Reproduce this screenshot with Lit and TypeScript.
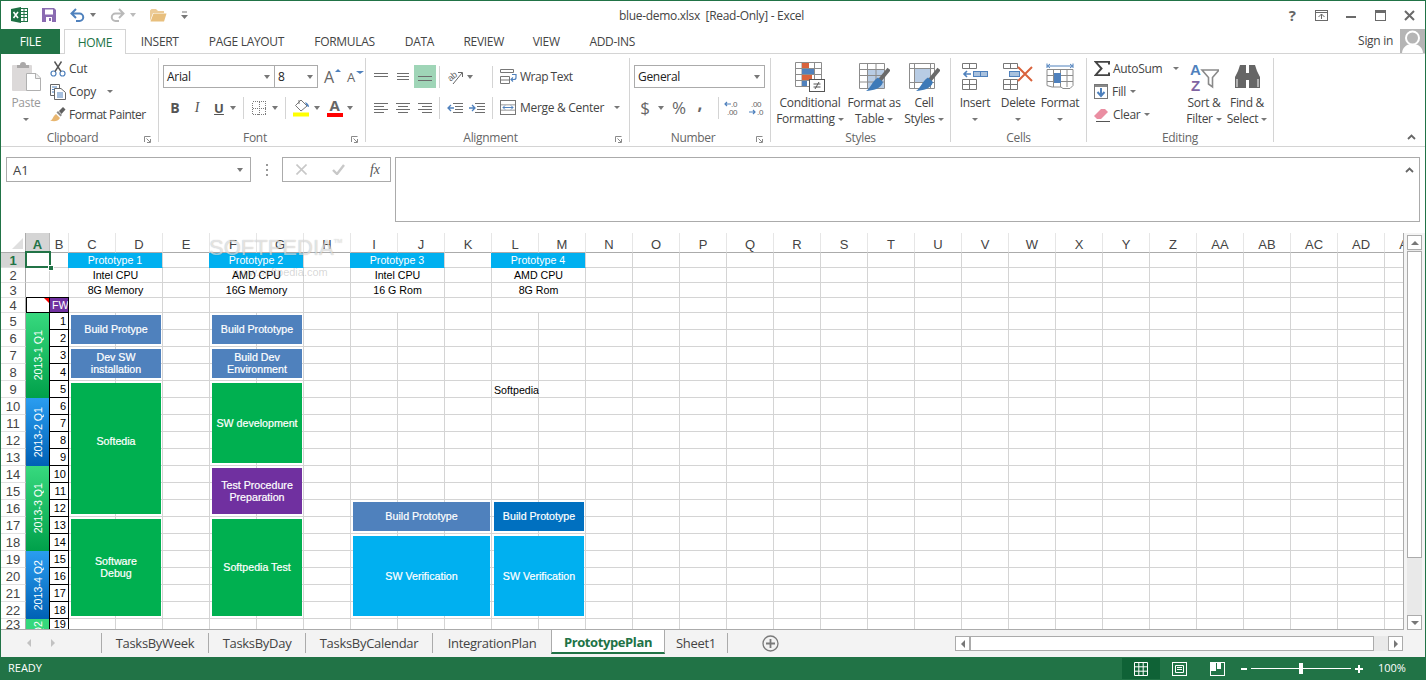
import { LitElement, html, css, svg, TemplateResult } from "lit";
import { customElement } from "lit/decorators.js";

const BL = "#4f81bd", GR = "#6d6d6d";
const ic = (w: number, h: number, body: unknown) =>
  html`<svg class="ic" width=${w} height=${h} viewBox="0 0 ${w} ${h}">${body}</svg>`;
const ln = (x1: number, y1: number, x2: number, y2: number, c = GR, sw = 1) =>
  svg`<line x1=${x1} y1=${y1} x2=${x2} y2=${y2} stroke=${c} stroke-width=${sw}/>`;
const caret = html`<i class="car"></i>`;

const icons: Record<string, () => TemplateResult> = {
  excel: () => ic(17, 16, svg`<rect x="9.5" y="1.5" width="7" height="13" fill="#fff" stroke="#1e7145"/>
    <path d="M10 4.5h6M10 7.5h6M10 10.5h6M13 2v12" stroke="#1e7145" fill="none"/>
    <path d="M0 2L10 0V16L0 14Z" fill="#1e7145"/><path d="M2.5 5l4.5 6M7 5l-4.5 6" stroke="#fff" stroke-width="1.6"/>`),
  save: () => ic(14, 14, svg`<path d="M0 0H12L14 2V14H0Z" fill="#8a6bb1"/><rect x="3" y="1.5" width="8" height="5" fill="#fff"/>
    <rect x="4" y="9" width="6" height="5" fill="#fff"/><rect x="7" y="10" width="2" height="3" fill="#8a6bb1"/>`),
  undo: () => ic(15, 14, svg`<path d="M6 1L1.5 5.5L6 10M2 5.5H9.5A3.7 3.7 0 0 1 9.5 13H6" fill="none" stroke=${BL} stroke-width="2"/>`),
  redo: () => ic(15, 14, svg`<path d="M9 1L13.5 5.5L9 10M13 5.5H5.5A3.7 3.7 0 0 0 5.5 13H9" fill="none" stroke="#b9b9b9" stroke-width="2"/>`),
  folder: () => ic(17, 14, svg`<path d="M0 13V2.5L1.5 1H6L8 3H14V5H3L0 13Z" fill="#eccb97"/><path d="M0.5 13.5L3.5 5.5H16.5L14 13.5Z" fill="#e8bf7d"/>`),
  custom: () => ic(7, 8, svg`<path d="M1 1H6" stroke="#777"/><path d="M0 4H7L3.5 8Z" fill="#777"/>`),
  help: () => html`<b class="help">?</b>`,
  ribbon: () => ic(13, 11, svg`<rect x=".5" y=".5" width="12" height="10" fill="none" stroke="#6a6a6a"/><path d="M1 2.5H12" stroke="#6a6a6a"/><path d="M3.5 7L6.5 4L9.5 7M6.5 4V9" fill="none" stroke="#6a6a6a"/>`),
  min: () => ic(10, 11, svg`<rect y="6" width="10" height="2" fill="#6a6a6a"/>`),
  max: () => ic(11, 11, svg`<rect x=".5" y=".5" width="10" height="10" fill="none" stroke="#6a6a6a"/><rect x="1" y="1" width="9" height="2" fill="#6a6a6a"/>`),
  close: () => ic(11, 11, svg`<path d="M1 1L10 10M10 1L1 10" stroke="#6a6a6a" stroke-width="2"/>`),
  paste: () => ic(30, 31, svg`<rect x="1" y="4" width="20" height="26" rx="1" fill="#dcd9d9"/><path d="M6 7V4H9A3 3 0 0 1 15 4H18V7Z" fill="#aaa8a8"/>
    <path d="M15.5 12.5H25L29.5 17V29.5H15.5Z" fill="#fff" stroke="#b0b0b0"/><path d="M24.5 13V17.5H29" fill="#eee" stroke="#b0b0b0"/>`),
  cut: () => ic(16, 16, svg`<circle cx="3.5" cy="12.5" r="2.5" fill="none" stroke=${BL} stroke-width="1.2"/><circle cx="12.5" cy="12.5" r="2.5" fill="none" stroke=${BL} stroke-width="1.2"/>
    <path d="M5 10.5L11.5 .5M11 10.5L4.5 .5" stroke="#555" stroke-width="1.4"/>`),
  copy: () => ic(16, 16, svg`<path d="M.5 .5H9.5V4M.5 .5V11.5H4" fill="none" stroke="#666"/><path d="M2 3H7M2 5.5H4M2 8H4" stroke=${BL}/>
    <path d="M4.5 4.5H11L15.5 8.5V15.5H4.5Z" fill="#fff" stroke="#666"/><path d="M7 9H13M7 11H13M7 13H13" stroke=${BL}/>`),
  painter: () => ic(16, 15, svg`<path d="M0 13.5C3 13 2.5 9.5 6 7L10 11C8 14.5 4 15 0 13.5Z" fill="#e8b670"/><path d="M6.5 5.5L8 4L12 8L10.5 9.5Z" fill="#8a8a8a"/><path d="M9 4L13 0L15.5 2.5L11.5 7Z" fill="#5f5f5f"/>`),
  launch: () => ic(7, 7, svg`<path d="M.5 6V.5H6.5" fill="none" stroke="#8a8a8a"/><path d="M2.5 2.5L6 6M6.5 3V6.5H3" fill="none" stroke="#8a8a8a"/>`),
  border: () => ic(14, 14, svg`<path d="M.5 .5H13.5V13.5H.5ZM7 .5V13.5M.5 7H13.5" fill="none" stroke="#7a7a7a" stroke-dasharray="1 1" shape-rendering="crispEdges"/>`),
  fill: () => ic(17, 18, svg`<path d="M8 1L14 7L8 12L2.5 6.5Z" fill="#fff" stroke="#777"/><path d="M6 1V5" stroke="#777"/><path d="M12 3C15 4 16 6 16 8C14.5 8 13 6 12 3Z" fill=${BL}/><rect y="13.5" width="16" height="4" fill="#ffff00"/>`),
  alignTop: () => ic(14, 14, svg`${ln(0, 3.5, 14, 3.5)}${ln(0, 6.5, 14, 6.5)}`),
  alignMid: () => ic(14, 14, svg`${ln(1, 6.5, 13, 6.5)}${ln(1, 9.5, 13, 9.5)}${ln(1, 3.5, 13, 3.5)}`),
  alignBot: () => ic(14, 14, svg`${ln(0, 6.5, 14, 6.5)}${ln(0, 10.5, 14, 10.5)}`),
  left: () => ic(15, 12, svg`${ln(0, 1.5, 14, 1.5)}${ln(0, 4.5, 10, 4.5)}${ln(0, 7.5, 14, 7.5)}${ln(0, 10.5, 10, 10.5)}`),
  center: () => ic(15, 12, svg`${ln(0, 1.5, 14, 1.5)}${ln(2, 4.5, 12, 4.5)}${ln(0, 7.5, 14, 7.5)}${ln(2, 10.5, 12, 10.5)}`),
  right: () => ic(15, 12, svg`${ln(0, 1.5, 14, 1.5)}${ln(4, 4.5, 14, 4.5)}${ln(0, 7.5, 14, 7.5)}${ln(4, 10.5, 14, 10.5)}`),
  orient: () => ic(17, 16, svg`<text x="1" y="10" transform="rotate(-40 6 8)" font-family="Liberation Sans" font-size="9" fill="#666">ab</text><path d="M6 15L15 4M11 3.5L15.5 3.5L15.5 8" fill="none" stroke="#666"/>`),
  outdent: () => ic(17, 12, svg`${ln(6, 1.5, 16, 1.5)}${ln(8, 4.5, 16, 4.5)}${ln(8, 7.5, 16, 7.5)}${ln(6, 10.5, 16, 10.5)}<path d="M7 6H1M4 3L1 6L4 9" fill="none" stroke=${BL} stroke-width="1.3"/>`),
  indent: () => ic(17, 12, svg`${ln(6, 1.5, 16, 1.5)}${ln(8, 4.5, 16, 4.5)}${ln(8, 7.5, 16, 7.5)}${ln(6, 10.5, 16, 10.5)}<path d="M0 6H6M3 3L6 6L3 9" fill="none" stroke=${BL} stroke-width="1.3"/>`),
  wrap: () => ic(17, 15, svg`<path d="M.5 .5H13.5V3.5H.5ZM.5 7.5H9.5V14.5H.5ZM.5 11H9.5" fill="none" stroke="#777"/><path d="M12 5.5H16V8.5A2 2 0 0 1 14 10.5H11M13 8.5L11 10.5L13 12.5" fill="none" stroke=${BL} stroke-width="1.2"/>`),
  merge: () => ic(17, 16, svg`<rect x=".5" y=".5" width="15" height="14" fill="none" stroke="#777"/><path d="M.5 5H15.5M.5 10H15.5" stroke="#777"/><rect x="1" y="5.5" width="14" height="4" fill="#fff"/><path d="M3 7.5H13M5 5.5L3 7.5L5 9.5M11 5.5L13 7.5L11 9.5" fill="none" stroke=${BL}/>`),
  decUp: () => ic(16, 16, svg`<text x="7" y="7" font-size="8" font-family="Liberation Sans" fill="#666">.0</text><text x="3" y="15" font-size="8" font-family="Liberation Sans" fill="#666">.00</text><path d="M1 4H7M3 2L1 4L3 6" fill="none" stroke=${BL} stroke-width="1.2"/>`),
  decDn: () => ic(16, 16, svg`<text x="3" y="7" font-size="8" font-family="Liberation Sans" fill="#666">.00</text><text x="9" y="15" font-size="8" font-family="Liberation Sans" fill="#666">.0</text><path d="M1 12H7M5 10L7 12L5 14" fill="none" stroke=${BL} stroke-width="1.2"/>`),
  cond: () => ic(31, 30, svg`<path d="M.5 .5H26.5V24.5H.5ZM7 .5V24.5M19.5 .5V18M.5 6.5H26.5M.5 12.5H26.5M.5 18.5H14" fill="none" stroke="#8c8c8c"/>
    <rect x="7" y="1" width="7" height="5" fill="#d9633d"/><rect x="7" y="7" width="12" height="5" fill=${BL}/><rect x="7" y="13" width="10" height="5" fill="#d9633d"/><rect x="7" y="19" width="5" height="5" fill=${BL}/>
    <rect x="14.5" y="17.5" width="15" height="12" fill="#fff" stroke="#555"/><path d="M18.5 22H25.5M18.5 25H25.5M24 20L20 27" stroke="#555"/>`),
  table: () => ic(31, 30, svg`<rect x="8" y="7" width="17" height="19" fill="#b8cce4"/><path d="M.5 1.5H25.5V26.5H.5ZM8.5 1.5V26.5M17 1.5V26.5M.5 7.5H25.5M.5 13.5H25.5M.5 20H25.5" fill="none" stroke="#8c8c8c"/>
    <path d="M30 7L21 18" stroke="#6a6a6a" stroke-width="4"/><path d="M19 15.5L24 20C22 27 14 28.5 7 29C12 26 13 19 19 15.5Z" fill="#3e7ab8"/>`),
  styles: () => ic(31, 30, svg`<path d="M.5 1.5H25.5V26.5H.5ZM5.5 1.5V26.5M21.5 1.5V26.5M.5 6.5H25.5M.5 20.5H25.5" fill="none" stroke="#8c8c8c"/><rect x="6" y="7" width="15" height="13" fill="#b8cce4"/>
    <path d="M30 7L21 18" stroke="#6a6a6a" stroke-width="4"/><path d="M19 15.5L24 20C22 27 14 28.5 7 29C12 26 13 19 19 15.5Z" fill="#3e7ab8"/>`),
  insert: () => ic(27, 27, svg`<path d="M.5 .5H14.5V5.5H.5ZM7.5 .5V5.5M.5 16.5H14.5V26.5H.5ZM7.5 16.5V26.5M.5 21.5H14.5" fill="none" stroke="#777"/>
    <rect x="11.5" y="8.5" width="14" height="5" fill="#a9c1dd" stroke=${BL}/><path d="M18.5 8.5V13.5" stroke=${BL}/><path d="M9 11H2M5 8L2 11L5 14" fill="none" stroke=${BL} stroke-width="1.6"/>`),
  del: () => ic(31, 27, svg`<path d="M.5 .5H14.5V5.5H.5ZM7.5 .5V5.5M.5 16.5H14.5V26.5H.5ZM7.5 16.5V26.5M.5 21.5H14.5" fill="none" stroke="#777"/>
    <rect x="6.5" y="8.5" width="10" height="5" fill="#a9c1dd" stroke=${BL}/><path d="M15 4L29 18M29 4L15 18" stroke="#d9633d" stroke-width="2"/>`),
  format: () => ic(28, 30, svg`<path d="M1 4H27M1 1.5V6M27 1.5V6M4 2L1.5 4L4 6M24 2L26.5 4L24 6" fill="none" stroke=${BL}/>
    <path d="M1 7.5H27V23.5L24 26.5H17L15 25H6L1 23.5ZM7.5 7.5V25M14.5 7.5V25M21 7.5V25M1 13.5H27M1 19.5H27" fill="none" stroke="#8c8c8c"/><rect x="8" y="11" width="7" height="10" fill=${BL}/>`),
  sigma: () => ic(16, 15, svg`<path d="M15 3.5V.8H1.5L7.5 7.5L1.5 14.2H15V11.5" fill="none" stroke="#444" stroke-width="2"/>`),
  fillD: () => ic(15, 16, svg`<rect x=".5" y=".5" width="13" height="14" fill="#fff" stroke="#777"/><rect x="1" y="1" width="12" height="2" fill="#888"/><path d="M7 4V11M3.5 8L7 12L10.5 8" fill="none" stroke=${BL} stroke-width="2"/>`),
  clear: () => ic(16, 14, svg`<path d="M0 8L7 1H11L14 4L7 11H3Z" fill="#ea8ea2"/><path d="M2 13.5H16" stroke="#555"/>`),
  sort: () => ic(30, 30, svg`<text x="1" y="13" font-family="Liberation Sans" font-weight="bold" font-size="15" fill=${BL}>A</text><text x="2" y="29" font-family="Liberation Sans" font-weight="bold" font-size="15" fill="#8064a2">Z</text>
    <path d="M13 8H30L23.5 15.5V25L19.5 22V15.5Z" fill="#fff" stroke="#8a8a8a" stroke-width="1.6"/>`),
  find: () => ic(27, 25, svg`<path d="M4 7L6 1H12V8V24H1V13Z" fill="#666"/><path d="M23 7L21 1H15V8V24H26V13Z" fill="#666"/><rect x="11" y="9" width="5" height="7" fill="#666"/>
    <path d="M3 15V23M24 15V23" stroke="#fff"/>`),
  collapse: () => ic(9, 6, svg`<path d="M1 5L4.5 1.5L8 5" fill="none" stroke="#666" stroke-width="1.8"/>`),
  person: () => ic(25, 25, svg`<circle cx="12.5" cy="9" r="6.5" fill="none" stroke="#fff" stroke-width="2"/><path d="M2 25C2 19 6 16 9 15.5H16C19 16 23 19 23 25Z" fill="#fff"/>`),
  x: () => ic(11, 11, svg`<path d="M.5 .5L10.5 10.5M10.5 .5L.5 10.5" stroke="#c8c8c8" stroke-width="1.6"/>`),
  check: () => ic(13, 11, svg`<path d="M1 6L5 10L12 1" fill="none" stroke="#c8c8c8" stroke-width="2.4"/>`),
  plus: () => ic(17, 17, svg`<circle cx="8.5" cy="8.5" r="7.5" fill="none" stroke="#7a7a7a" stroke-width="1.3"/><path d="M8.5 4V13M4 8.5H13" stroke="#7a7a7a" stroke-width="1.8"/>`),
  vNormal: () => ic(14, 14, svg`<path d="M.5 .5H13.5V13.5H.5ZM4.8 .5V13.5M9.2 .5V13.5M.5 4.8H13.5M.5 9.2H13.5" fill="none" stroke="#fff"/>`),
  vLayout: () => ic(15, 14, svg`<rect x=".5" y=".5" width="14" height="13" fill="none" stroke="#fff"/><path d="M3.5 3.5H11.5V10.5H3.5ZM5 5.5H10M5 7.5H10" fill="none" stroke="#fff"/>`),
  vBreak: () => ic(15, 14, svg`<rect x=".5" y=".5" width="14" height="13" fill="none" stroke="#fff"/><rect x="1" y="1" width="5" height="8" fill="#fff"/><rect x="7" y="1" width="4" height="6" fill="#fff"/>`),
};

const colNames = ["A", "B", ..."CDEFGHIJKLMNOPQRSTUVWXYZ", "AA", "AB", "AC", "AD", "AE"];
const header: Record<number, [string, string, string]> = {
  2: ["Prototype 1", "Intel CPU", "8G Memory"],
  5: ["Prototype 2", "AMD CPU", "16G Memory"],
  8: ["Prototype 3", "Intel CPU", "16 G Rom"],
  11: ["Prototype 4", "AMD CPU", "8G Rom"],
};
const bands: Record<number, [number, string, string]> = {
  5: [5, "band-g", "2013-1 Q1"],
  10: [4, "band-b", "2013-2 Q1"],
  14: [5, "band-g", "2013-3 Q1"],
  19: [4, "band-b", "2013-4 Q2"],
  23: [1, "band-g end", "Q2"],
};
const shapes: [number, number, number, number, string, string[]][] = [
  [71, 315, 90, 29, "s-blue", ["Build Protype"]],
  [71, 349, 90, 29, "s-blue", ["Dev SW", "installation"]],
  [71, 383, 90, 131, "s-green", ["Softedia"]],
  [71, 519, 90, 97, "s-green", ["Software", "Debug"]],
  [212, 315, 90, 29, "s-blue", ["Build Prototype"]],
  [212, 349, 90, 29, "s-blue", ["Build Dev", "Environment"]],
  [212, 383, 90, 80, "s-green", ["SW development"]],
  [212, 468, 90, 46, "s-purple", ["Test Procedure", "Preparation"]],
  [212, 519, 90, 97, "s-green", ["Softpedia Test"]],
  [353, 502, 137, 29, "s-blue", ["Build Prototype"]],
  [353, 536, 137, 80, "s-cyan", ["SW Verification"]],
  [494, 502, 90, 29, "s-dblue", ["Build Prototype"]],
  [494, 536, 90, 80, "s-cyan", ["SW Verification"]],
];
const ribbonTabs: [string, number][] = [["INSERT", 67.5], ["PAGE LAYOUT", 106], ["FORMULAS", 90], ["DATA", 60], ["REVIEW", 68.5], ["VIEW", 56.5], ["ADD-INS", 75.5]];
const sheets: [string, number, boolean][] = [["TasksByWeek", 107, false], ["TasksByDay", 97, false], ["TasksByCalendar", 127, false], ["IntegrationPlan", 119, false], ["PrototypePlan", 114, true], ["Sheet1", 63, false]];

@customElement("app-root")
export class AppRoot extends LitElement {
  static styles = css`
    :host { display: block; width: 1426px; height: 680px; overflow: hidden; background: #fff; }
    * { box-sizing: border-box; }
    .win { width: 1426px; height: 680px; border: 1px solid #217346; border-bottom: 0; display: flex; flex-direction: column; color: #444; font: 12px/16px "Open Sans", "Noto Sans", sans-serif; letter-spacing: -.3px; background: #fff; }
    .ic { display: block; flex: none; }
    .car { display: block; flex: none; width: 0; height: 0; border: 3.5px solid transparent; border-top: 4px solid #777; border-bottom: 0; }
    .title { flex: none; height: 28px; display: grid; grid-template-columns: 1fr auto 1fr; align-items: center; }
    .qat { display: flex; align-items: center; padding-left: 10px; gap: 14px; }
    .pair { display: flex; align-items: center; gap: 5px; }
    .doc { color: #444; padding: 2px 3px 0 0; white-space: pre; }
    .winb { display: flex; justify-content: flex-end; padding-right: 1px; }
    .winb div { width: 29.3px; height: 22px; display: flex; align-items: center; justify-content: center; }
    .help { font: bold 15px "Open Sans", sans-serif; color: #666; }
    .tabs { flex: none; height: 25px; display: flex; border-bottom: 1px solid #d4d4d4; }
    .tab { height: 24px; line-height: 25px; text-align: center; white-space: nowrap; }
    .file { width: 59px; height: 25px; margin-right: 4px; background: #217346; color: #fff; }
    .home { width: 62px; height: 25px; border: 1px solid #d4d4d4; border-bottom: 0; background: #fff; color: #217346; }
    .sign { margin-left: auto; display: flex; gap: 7px; height: 24px; }
    .sign span { line-height: 24px; }
    .avatar { width: 25px; height: 24px; background: #b5b5b5; overflow: hidden; }
    .ribbon { flex: none; height: 93px; padding-top: 4px; display: flex; border-bottom: 1px solid #d4d4d4; }
    .group { flex: none; height: 84px; display: flex; flex-direction: column; border-right: 1px solid #d4d4d4; }
    .g-clip { width: 158px; } .g-font { width: 207px; } .g-align { width: 264px; } .g-num { width: 141px; }
    .g-styles { width: 180px; } .g-cells { width: 136px; } .g-edit { width: 187px; }
    .body { flex: none; height: 72px; display: flex; }
    .label { flex: none; height: 16px; display: grid; grid-template-columns: 1fr 14px; align-items: center; text-align: center; color: #666; }
    .label.plain { grid-template-columns: 1fr; }
    .label .ic { margin-top: 2px; }
    .big { flex: none; display: flex; flex-direction: column; align-items: center; white-space: nowrap; }
    .big .pic { height: 37px; display: flex; align-items: center; justify-content: center; }
    .big .tx { height: 16px; display: flex; align-items: center; gap: 3px; }
    .big .tx .car { border-width: 3px; border-top-width: 3px; border-bottom: 0; }
    .paste { margin-left: 7px; color: #999; }
    .smalls { margin-top: -1px; display: flex; flex-direction: column; margin-left: 6px; }
    .sm { height: 23px; display: flex; align-items: center; gap: 3px; white-space: nowrap; }
    .sm .car { border-width: 3px; border-top-width: 3px; margin-left: 3px; }
    .tight { letter-spacing: -.5px; }
    .rows { padding: 7px 0 0 4px; display: flex; flex-direction: column; gap: 8px; }
    .row { height: 23px; display: flex; align-items: center; flex: none; }
    .sel { height: 23px; border: 1px solid #ababab; display: flex; align-items: center; justify-content: space-between; padding: 0 4px 0 3px; color: #222; background: #fff; }
    .f-name { width: 112px; } .f-size { width: 44px; margin-left: -1px; }
    .grow { font: 16px "Open Sans", sans-serif; color: #666; width: 22px; display: flex; align-items: flex-start; letter-spacing: 0; }
    .tri { width: 0; height: 0; border: 3px solid transparent; border-bottom: 3px solid #4f81bd; border-top: 0; margin: 3px 0 0 1px; }
    .tri.dn { border-bottom: 0; border-top: 3px solid #4f81bd; }
    .shrink { font-size: 13px; margin-left: 1px; }
    .b { width: 22px; text-align: center; font: bold 14px "Open Sans", sans-serif; color: #555; letter-spacing: 0; }
    .i { width: 22px; text-align: center; font: italic 14px "Liberation Serif", serif; color: #555; }
    .u { width: 22px; text-align: center; font: bold 13px "Open Sans", sans-serif; color: #555; text-decoration: underline; letter-spacing: 0; }
    .vsep { flex: none; width: 1px; height: 22px; background: #d4d4d4; }
    .fcol { width: 17px; display: flex; flex-direction: column; align-items: center; font: bold 15px/15px "Open Sans", sans-serif; color: #666; }
    .fcol i { width: 16px; height: 4px; background: #f00; display: block; }
    .sq { width: 22px; height: 23px; display: flex; align-items: center; justify-content: center; flex: none; }
    .sq.on { background: #9fd5b7; }
    .sym { font-size: 17px; color: #666; text-align: center; letter-spacing: 0; }
    .comma { font-weight: bold; padding-bottom: 7px; }
    .formula { flex: none; height: 86px; padding: 10px 5px 0; display: flex; align-items: flex-start; }
    .box { border: 1px solid #ababab; background: #fff; }
    .name { width: 245px; height: 25px; display: flex; align-items: center; justify-content: space-between; padding: 0 7px 0 6px; font: 13px "Open Sans", sans-serif; color: #444; letter-spacing: 0; }
    .dots { width: 31px; height: 25px; display: flex; flex-direction: column; align-items: center; justify-content: center; gap: 3px; }
    .dots i { width: 2px; height: 2px; background: #999; display: block; }
    .fx { width: 109px; height: 25px; display: flex; align-items: center; justify-content: space-between; padding: 0 10px 0 13px; font: italic 14px "Liberation Serif", serif; color: #555; letter-spacing: 0; }
    .fbox { margin-left: 4px; width: 1025px; height: 65px; display: flex; justify-content: flex-end; padding: 9px 5px 0 0; }
    .sheet { flex: none; height: 397px; display: flex; background: #f4f4f4; }
    .gridwrap { flex: none; width: 1403px; height: 397px; overflow: hidden; position: relative; background: #fff; border-right: 1px solid #ababab; border-bottom: 1px solid #ababab; }
    .grid { display: grid; width: 1431px; grid-template-columns: 25px 24px 19px repeat(29, 47px); grid-template-rows: 20px repeat(4, 15px) repeat(18, 17px) 11px; }
    .c { border-right: 1px solid #d4d4d4; border-bottom: 1px solid #d4d4d4; display: flex; align-items: center; justify-content: center; white-space: nowrap; overflow: hidden; font: 10.67px "Liberation Sans", Arial, sans-serif; color: #000; letter-spacing: 0; min-width: 0; min-height: 0; }
    .corner { align-items: flex-end; justify-content: flex-end; padding: 0 2px 3px 0; border-bottom-color: #ababab; border-right-color: #ababab; }
    .ch { font-size: 13px; color: #444; border-right-color: #e6e6e6; border-bottom-color: #ababab; padding-top: 3px; }
    .ch.on { background: #d5d5d5; color: #217346; font-weight: bold; border-right-color: #bbb; }
    .rh { font-size: 13px; color: #444; border-right-color: #ababab; border-bottom-color: #e0e0e0; }
    .rh.on { background: #d5d5d5; color: #217346; font-weight: bold; }
    .merge { grid-column: span 2; }
    .p1 { background: #00b0f0; color: #fff; margin-left: -1px; border-bottom-color: #00b0f0; }
    .a4 { border: 1px solid #000; margin-top: -1px; position: relative; }
    .flag { position: absolute; right: 0; top: 0; width: 0; height: 0; border-top: 5px solid #f00; border-left: 5px solid transparent; }
    .fw { background: #7030a0; color: #fff; justify-content: flex-start; padding-left: 2px; border: 1px solid #000; border-left: 0; margin-top: -1px; }
    .num { border-right: 1px solid #000; border-bottom: 1px solid #000; justify-content: flex-end; padding-right: 2px; font-size: 11px; }
    .band { border-right: 1px solid #000; border-bottom: 0; color: #fff; }
    .band span { writing-mode: vertical-rl; transform: rotate(180deg); }
    .band.end { align-items: flex-start; padding-top: 2px; background: #35d87c; }
    .band-g { background: linear-gradient(#37d97e, #00a04a); }
    .band-b { background: linear-gradient(#2a9df0, #0061b5); }
    .over { overflow: visible; justify-content: flex-start; padding: 1px 0 0 2px; }
    .shape { position: absolute; display: flex; flex-direction: column; align-items: center; justify-content: center; color: #fff; font: 10.67px/12px "Liberation Sans", Arial, sans-serif; letter-spacing: 0; white-space: nowrap; -webkit-text-stroke: .2px #fff; }
    .s-blue { background: #4f81bd; } .s-green { background: #00b050; } .s-purple { background: #7030a0; } .s-cyan { background: #00b0f0; } .s-dblue { background: #0070c0; }
    .cursor { position: absolute; left: 24px; top: 18px; width: 26px; height: 17px; border: 2px solid #217346; }
    .handle { position: absolute; left: 47px; top: 32px; width: 6px; height: 6px; background: #217346; border: 1px solid #fff; }
    .wm { position: absolute; left: 208px; top: 2px; font: 22px "Liberation Sans", sans-serif; letter-spacing: 0; color: rgba(255,255,255,.6); text-shadow: 0 0 1px rgba(0,0,0,.3); white-space: nowrap; pointer-events: none; }
    .wm sup { font-size: 6px; vertical-align: 12px; }
    .wm2 { position: absolute; left: 232px; top: 33px; font: 11px "Liberation Sans", sans-serif; color: rgba(120,120,120,.3); white-space: nowrap; letter-spacing: 0; pointer-events: none; }
    .vs { flex: none; width: 15px; margin: 2px 0 0 3px; display: flex; flex-direction: column; background: #e9e9e9; }
    .sbtn { flex: none; width: 15px; height: 15px; background: #fff; border: 1px solid #ababab; display: flex; align-items: center; justify-content: center; }
    .up { width: 0; height: 0; border: 4px solid transparent; border-bottom: 4px solid #777; border-top: 0; }
    .dn { width: 0; height: 0; border: 4px solid transparent; border-top: 4px solid #777; border-bottom: 0; }
    .lf { width: 0; height: 0; border: 4px solid transparent; border-right: 4px solid #777; border-left: 0; }
    .rt { width: 0; height: 0; border: 4px solid transparent; border-left: 4px solid #777; border-right: 0; }
    .vthumb { flex: none; height: 307px; margin-top: 1px; background: #fff; border: 1px solid #ababab; }
    .vtrack { flex: 1; }
    .strip { flex: none; height: 27px; background: #f3f3f3; display: flex; align-items: flex-start; }
    .nav { flex: none; width: 101px; margin-top: 3px; height: 20px; border-right: 1px solid #ababab; display: flex; align-items: center; gap: 20px; padding-left: 26px; }
    .nav .lf { border-right-color: #c2c2c2; } .nav .rt { border-left-color: #c2c2c2; }
    .st { flex: none; margin-top: 3px; height: 20px; line-height: 20px; text-align: center; border-right: 1px solid #ababab; font-size: 13px; color: #444; white-space: nowrap; letter-spacing: -.3px; }
    .st.active { margin-top: 0; margin-left: -1px; height: 24px; line-height: 25px; background: #fff; border-left: 1px solid #ababab; border-bottom: 2px solid #217346; color: #217346; font-weight: bold; letter-spacing: -.4px; }
    .st.next { border-left: 0; }
    .addsheet { margin: 5px 0 0 34px; }
    .hs { margin: 6px 22px 0 auto; display: flex; height: 15px; }
    .hthumb { width: 404px; height: 15px; background: #fff; border: 1px solid #ababab; }
    .htrack { width: 14px; background: #e9e9e9; }
    .status { flex: none; height: 23px; background: #217346; display: flex; align-items: center; color: #fff; font-size: 11px; letter-spacing: 0; }
    .ready { padding: 0 0 2px 7px; width: 1121px; }
    .vb { flex: none; width: 38px; height: 21px; display: flex; align-items: center; justify-content: center; }
    .vb.on { background: #0f6236; }
    .minus { width: 6px; height: 2px; background: #fff; margin: 0 4px 0 5px; flex: none; }
    .slider { width: 100px; height: 1px; background: #fff; position: relative; flex: none; }
    .slider i { position: absolute; left: 48px; top: -5px; width: 4px; height: 11px; background: #fff; }
    .plus { margin-left: 4px; width: 8px; height: 8px; flex: none; background: linear-gradient(#fff,#fff) center/8px 2px no-repeat, linear-gradient(#fff,#fff) center/2px 8px no-repeat; }
    .pct { margin-left: 15px; padding-bottom: 2px; }
  `;

  private big(icon: string, lines: string[], width: number, cls = "") {
    return html`<div class="big ${cls}" style="width:${width}px">
      <div class="pic">${icons[icon]()}</div>
      ${lines.map((l, i) => html`<div class="tx">${l}${lines.length > 1 && i === lines.length - 1 ? caret : ""}</div>`)}
      ${lines.length === 1 ? html`<div class="tx">${caret}</div>` : ""}
    </div>`;
  }

  private label(t: string, launcher = true) {
    return html`<div class="label ${launcher ? "" : "plain"}"><span>${t}</span>${launcher ? icons.launch() : ""}</div>`;
  }

  private sq(i: string, on = false) {
    return html`<div class="sq ${on ? "on" : ""}">${icons[i]()}</div>`;
  }

  private grid() {
    const cells: TemplateResult[] = [];
    cells.push(html`<div class="c corner">${ic(11, 11, svg`<path d="M11 0V11H0Z" fill="#dfdfdf"/>`)}</div>`);
    colNames.forEach((n, i) => cells.push(html`<div class="c ch ${i === 0 ? "on" : ""}">${n}</div>`));
    const heads = Object.keys(header).map(Number);
    for (let r = 1; r <= 23; r++) {
      cells.push(html`<div class="c rh ${r === 1 ? "on" : ""}">${r}</div>`);
      for (let c = 0; c < colNames.length; c++) {
        if (c === 0) {
          if (r < 4) cells.push(html`<div class="c"></div>`);
          else if (r === 4) cells.push(html`<div class="c a4"><i class="flag"></i></div>`);
          else if (bands[r]) {
            const [n, k, t] = bands[r];
            cells.push(html`<div class="c band ${k}" style="grid-row:span ${n}"><span>${t}</span></div>`);
          }
          continue;
        }
        if (c === 1) {
          if (r < 4) cells.push(html`<div class="c"></div>`);
          else if (r === 4) cells.push(html`<div class="c fw">FW</div>`);
          else cells.push(html`<div class="c num">${r - 4}</div>`);
          continue;
        }
        if (r <= 4 && heads.includes(c)) {
          const t = r < 4 ? header[c][r - 1] : "";
          cells.push(html`<div class="c merge ${r === 1 ? "p1" : ""}">${t}</div>`);
          c++;
          continue;
        }
        if (r === 9 && c === 11) { cells.push(html`<div class="c over">Softpedia</div>`); continue; }
        cells.push(html`<div class="c"></div>`);
      }
    }
    return cells;
  }

  render() {
    return html`<div class="win">
      <div class="title">
        <div class="qat">
          ${icons.excel()}${icons.save()}
          <div class="pair">${icons.undo()}${caret}</div>
          <div class="pair">${icons.redo()}<i class="car" style="border-top-color:#bbb"></i></div>
          ${icons.folder()}${icons.custom()}
        </div>
        <div class="doc">blue-demo.xlsx  [Read-Only] - Excel</div>
        <div class="winb">
          <div>${icons.help()}</div><div>${icons.ribbon()}</div><div>${icons.min()}</div><div>${icons.max()}</div><div>${icons.close()}</div>
        </div>
      </div>
      <div class="tabs">
        <div class="tab file">FILE</div>
        <div class="tab home">HOME</div>
        ${ribbonTabs.map(([t, w]) => html`<div class="tab" style="width:${w}px">${t}</div>`)}
        <div class="sign"><span>Sign in</span><div class="avatar">${icons.person()}</div></div>
      </div>
      <div class="ribbon">
        <div class="group g-clip">
          <div class="body">
            ${this.big("paste", ["Paste"], 36, "paste")}
            <div class="smalls">
              <div class="sm">${icons.cut()}<span>Cut</span></div>
              <div class="sm">${icons.copy()}<span>Copy</span><i class="car" style="margin-left:8px"></i></div>
              <div class="sm">${icons.painter()}<span class="tight">Format Painter</span></div>
            </div>
          </div>
          ${this.label("Clipboard")}
        </div>
        <div class="group g-font">
          <div class="body"><div class="rows">
            <div class="row">
              <div class="sel f-name"><span>Arial</span>${caret}</div>
              <div class="sel f-size"><span>8</span>${caret}</div>
              <div class="grow" style="margin-left:6px">A<i class="tri"></i></div>
              <div class="grow shrink">A<i class="tri dn"></i></div>
            </div>
            <div class="row">
              <div style="width:1px"></div>
              <div class="b">B</div><div class="i">I</div><div class="u">U</div>${caret}
              <div style="width:7px"></div><div class="vsep"></div><div style="width:8px"></div>
              ${icons.border()}<div style="width:6px"></div>${caret}
              <div style="width:7px"></div><div class="vsep"></div><div style="width:7px"></div>
              ${icons.fill()}<div style="width:4px"></div>${caret}
              <div style="width:6px"></div><div class="fcol">A<i></i></div><div style="width:4px"></div>${caret}
            </div>
          </div></div>
          ${this.label("Font")}
        </div>
        <div class="group g-align">
          <div class="body"><div class="rows">
            <div class="row">
              ${this.sq("alignTop")}${this.sq("alignMid")}${this.sq("alignBot", true)}
              <div style="width:3px"></div><div class="vsep"></div><div style="width:7px"></div>
              ${icons.orient()}<div style="width:3px"></div>${caret}
              <div style="width:19px"></div><div class="vsep"></div><div style="width:7px"></div>
              <div class="sm">${icons.wrap()}<span class="tight">Wrap Text</span></div>
            </div>
            <div class="row">
              ${this.sq("left")}${this.sq("center")}${this.sq("right")}
              <div style="width:3px"></div><div class="vsep"></div><div style="width:7px"></div>
              ${icons.outdent()}<div style="width:5px"></div>${icons.indent()}
              <div style="width:6px"></div><div class="vsep"></div><div style="width:7px"></div>
              <div class="sm">${icons.merge()}<span>Merge &amp; Center</span><i class="car" style="margin-left:7px"></i></div>
            </div>
          </div></div>
          ${this.label("Alignment")}
        </div>
        <div class="group g-num">
          <div class="body"><div class="rows">
            <div class="row"><div class="sel" style="width:131px"><span>General</span>${caret}</div></div>
            <div class="row">
              <div style="width:4px"></div><div class="sym" style="width:14px">$</div><div style="width:6px"></div>${caret}
              <div style="width:4px"></div><div class="sym" style="width:22px">%</div>
              <div class="sym comma" style="width:20px">,</div><div style="width:8px"></div>
              <div class="vsep"></div><div style="width:5px"></div>${icons.decUp()}<div style="width:8px"></div>${icons.decDn()}
            </div>
          </div></div>
          ${this.label("Number")}
        </div>
        <div class="group g-styles">
          <div class="body">
            ${this.big("cond", ["Conditional", "Formatting"], 78)}
            ${this.big("table", ["Format as", "Table"], 50)}
            ${this.big("styles", ["Cell", "Styles"], 50)}
          </div>
          ${this.label("Styles", false)}
        </div>
        <div class="group g-cells">
          <div class="body" style="padding-left:3px">
            ${this.big("insert", ["Insert"], 42)}
            ${this.big("del", ["Delete"], 44)}
            ${this.big("format", ["Format"], 40)}
          </div>
          ${this.label("Cells", false)}
        </div>
        <div class="group g-edit">
          <div class="body">
            <div class="smalls" style="margin-left:7px;width:89px">
              <div class="sm">${icons.sigma()}<span>AutoSum</span><i class="car" style="margin-left:8px"></i></div>
              <div class="sm">${icons.fillD()}<span>Fill</span><i class="car" style="margin-left:1px"></i></div>
              <div class="sm">${icons.clear()}<span>Clear</span><i class="car" style="margin-left:1px"></i></div>
            </div>
            ${this.big("sort", ["Sort &", "Filter"], 42)}
            ${this.big("find", ["Find &", "Select"], 44)}
          </div>
          ${this.label("Editing", false)}
        </div>
        <div style="flex:1;display:flex;justify-content:flex-end;align-items:flex-end;padding:0 9px 6px 0">${icons.collapse()}</div>
      </div>
      <div class="formula">
        <div class="box name"><span>A1</span>${caret}</div>
        <div class="dots"><i></i><i></i><i></i></div>
        <div class="box fx">${icons.x()}${icons.check()}<span>fx</span></div>
        <div class="box fbox">${icons.collapse()}</div>
      </div>
      <div class="sheet">
        <div class="gridwrap">
          <div class="grid">${this.grid()}</div>
          ${shapes.map(([x, y, w, h, k, t]) => html`<div class="shape ${k}" style="left:${x - 1}px;top:${y - 233}px;width:${w}px;height:${h}px;padding-bottom:${t[0] === "Softedia" ? 15 : h % 2}px">${t.map((l) => html`<div>${l}</div>`)}</div>`)}
          <div class="cursor"></div><div class="handle"></div>
          <div class="wm">SOFTPEDIA<sup>TM</sup></div><div class="wm2">www.softpedia.com</div>
        </div>
        <div class="vs">
          <div class="sbtn"><i class="up"></i></div>
          <div class="vthumb"></div><div class="vtrack"></div>
          <div class="sbtn"><i class="dn"></i></div>
        </div>
      </div>
      <div class="strip">
        <div class="nav"><i class="lf"></i><i class="rt"></i></div>
        ${sheets.map(([t, w, a], i) => html`<div class="st ${a ? "active" : ""} ${i === 5 ? "next" : ""}" style="width:${w}px">${t}</div>`)}
        <div class="addsheet">${icons.plus()}</div>
        <div class="hs">
          <div class="sbtn"><i class="lf"></i></div><div class="hthumb"></div><div class="htrack"></div><div class="sbtn"><i class="rt"></i></div>
        </div>
      </div>
      <div class="status">
        <div class="ready">READY</div>
        <div class="vb on">${icons.vNormal()}</div><div class="vb">${icons.vLayout()}</div><div class="vb">${icons.vBreak()}</div>
        <div class="minus"></div><div class="slider"><i></i></div><div class="plus"></div>
        <div class="pct">100%</div>
      </div>
    </div>`;
  }
}
